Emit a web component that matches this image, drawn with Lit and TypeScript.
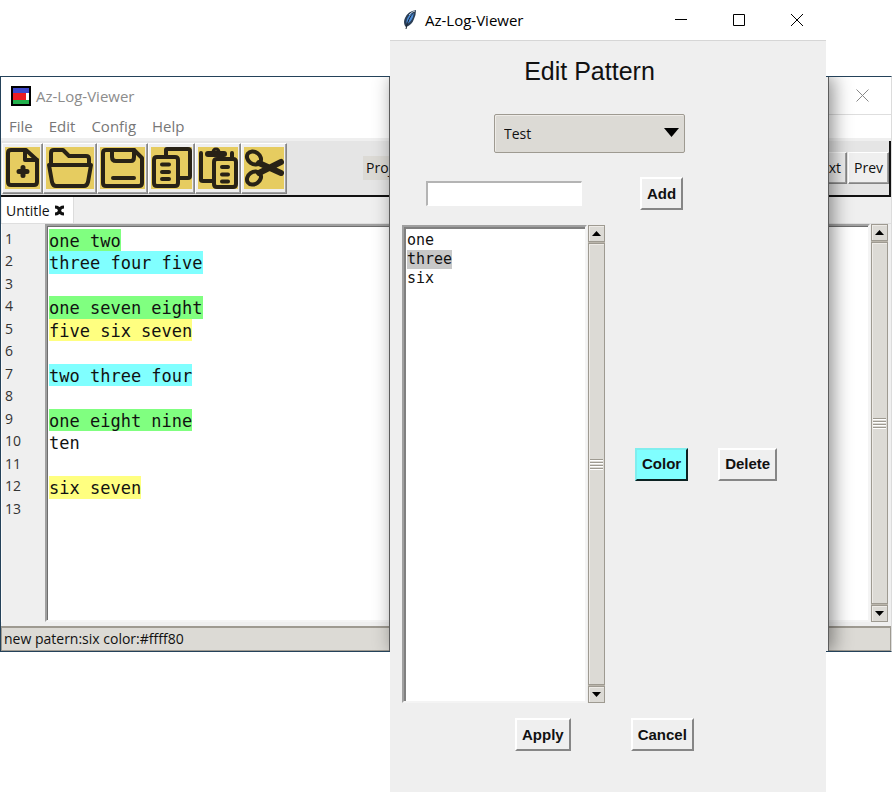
import { LitElement, html, svg, css } from "lit";
import { customElement, property } from "lit/decorators.js";

interface Line {
  text: string;
  tone: string;
}

const LINES: Line[] = [
  { text: "one two", tone: "green" },
  { text: "three four five", tone: "cyan" },
  { text: "", tone: "" },
  { text: "one seven eight", tone: "green" },
  { text: "five six seven", tone: "yellow" },
  { text: "", tone: "" },
  { text: "two three four", tone: "cyan" },
  { text: "", tone: "" },
  { text: "one eight nine", tone: "green" },
  { text: "ten", tone: "" },
  { text: "", tone: "" },
  { text: "six seven", tone: "yellow" },
  { text: "", tone: "" },
];

const TOOLS = [
  {
    name: "New",
    w: 35,
    art: svg`<path d="M21 3H6q-3 0-3 3v29q0 3 3 3h23q3 0 3-3V13z"/><path d="M20 3v10h12"/><path d="M18 20.500v8M14 24.500h8" stroke-width="5"/>`,
  },
  {
    name: "Open",
    w: 48,
    art: svg`<path d="M5 17V6q0-3 3-3h9l6 6h17q3 0 3 3v5"/><path d="M3 18h42l-3 17q-1 4-4 4H10q-3 0-4-4z"/>`,
  },
  {
    name: "Save",
    w: 45,
    art: svg`<path d="M3 6q0-3 3-3h28l8 8v25q0 3-3 3H6q-3 0-3-3z"/><path d="M12 3v7q0 4 4 4h15q3 0 3-4V3M13 31h21"/>`,
  },
  {
    name: "Copy",
    w: 41,
    art: svg`<path d="M15 9V3q0-1 1-1h21q2 0 2 2v25q0 2-2 2h-9"/><path d="M3 13q0-3 3-3h18q3 0 3 3v23q0 3-3 3H6q-3 0-3-3z"/><path d="M11 17.500h7M11 25h7M11 32h7"/>`,
  },
  {
    name: "Paste",
    w: 40,
    art: svg`<path d="M3 6v27q0 1 2 1h9M34 6v4"/><path d="M10 7h16" stroke-width="6"/><path d="M15 6q0-4 3-4t3 4" stroke-width="3"/><path d="M16 15q0-3 3-3h16q3 0 3 3v22q0 3-3 3H19q-3 0-3-3z"/><path d="M24 20h6M24 27.500h6M24 34.500h6"/>`,
  },
  {
    name: "Cut",
    w: 40,
    art: svg`<ellipse cx="10" cy="11" rx="7.500" ry="6" transform="rotate(35 10 11)"/><ellipse cx="10" cy="31" rx="7.500" ry="6" transform="rotate(-35 10 31)"/><path d="M15 16l22 10M15 26l22-11" stroke-width="6"/>`,
  },
];

@customElement("tk-scrollbar")
export class TkScrollbar extends LitElement {
  @property() label = "";

  static styles = css`
    :host {
      display: flex;
      flex-direction: column;
      gap: 1px;
      width: 17px;
      flex: none;
      background: #bab5ab;
    }
    .arrow,
    .thumb {
      box-sizing: border-box;
      margin: 0;
      padding: 0;
      border: 1px solid #9e9a91;
      background: #dcdad5;
      box-shadow: inset 1px 1px #eeebe7;
      display: flex;
      align-items: center;
      justify-content: center;
    }
    .arrow {
      height: 17px;
    }
    .thumb {
      flex: 1;
    }
    svg {
      display: block;
    }
  `;

  render() {
    return html`
      <button class="arrow" aria-label="Scroll ${this.label} up">
        <svg width="9" height="5"><path d="M4.500 0L9 5H0z" /></svg>
      </button>
      <div class="thumb">
        <svg width="13" height="13" shape-rendering="crispEdges">
          <path d="M0 1.500h13M0 4.500h13M0 7.500h13M0 10.500h13" stroke="#9e9a91" />
          <path d="M0 2.500h13M0 5.500h13M0 8.500h13M0 11.500h13" stroke="#fff" />
        </svg>
      </div>
      <button class="arrow" aria-label="Scroll ${this.label} down">
        <svg width="9" height="5"><path d="M0 0h9L4.500 5z" /></svg>
      </button>
    `;
  }
}

@customElement("log-window")
export class LogWindow extends LitElement {
  static styles = css`
    :host {
      display: block;
      position: relative;
      box-sizing: border-box;
      overflow: hidden;
      background: #efefef;
      border: 1px solid #24425a;
      border-right-color: #dcdcdc;
      font: 14px/20px "Open Sans", "Noto Sans", sans-serif;
      color: #111;
    }
    button {
      margin: 0;
      font: inherit;
      color: inherit;
    }
    .titlebar {
      display: flex;
      align-items: center;
      height: 37px;
      padding-left: 10px;
      gap: 5px;
      background: #fff;
      color: #8c8c8c;
      font-size: 15px;
    }
    .titlebar svg {
      display: block;
    }
    .title {
      flex: 1;
    }
    .close {
      width: 58px;
      height: 37px;
      padding: 0;
      border: 0;
      background: none;
      display: flex;
      align-items: center;
      justify-content: center;
    }
    .menu {
      display: flex;
      gap: 16px;
      height: 24px;
      padding-left: 8px;
      align-items: center;
      background: linear-gradient(#dedede, #dedede) right top / 64px 1px no-repeat #fff;
      border-bottom: 3px solid #efefef;
    }
    .menu button {
      padding: 0;
      border: 0;
      background: none;
      font-size: 15px;
      color: #777;
    }
    .toolbar {
      display: flex;
      align-items: center;
      height: 54px;
      padding-left: 1px;
      background: #e5e5e5;
      border-bottom: 2px solid #111;
      border-right: 2px solid #111;
    }
    .tool,
    .nav {
      border: 1px solid;
      border-color: #fff #858585 #858585 #fff;
      box-shadow: inset -1px -1px #a0a0a0;
      background: #efefef;
    }
    .tool {
      padding: 3px 2px 4px;
    }
    .tool svg {
      display: block;
      background: #e6cc60;
    }
    .spacer {
      flex: 1;
    }
    .project {
      margin-left: 76px;
      padding: 2px 3px;
      background: #dcdad5;
    }
    .nav {
      height: 32px;
      padding: 0 5px;
      margin-left: 1px;
    }
    .tabs {
      display: flex;
      height: 26px;
      padding-left: 1px;
      border-bottom: 1px solid #dedede;
    }
    .tab {
      display: flex;
      align-items: center;
      gap: 4px;
      padding: 1px 8px 0 4px;
      background: #fff;
      border-right: 1px solid #dcdcdc;
    }
    .tab button {
      padding: 0;
      border: 0;
      background: none;
    }
    .tab svg {
      display: block;
    }
    .editor {
      display: flex;
      min-height: 398px;
      padding-right: 3px;
      margin-bottom: 4px;
      gap: 1px;
    }
    .numbers,
    .text {
      display: grid;
      grid-auto-rows: 22px 23px;
      align-content: start;
      margin: 0;
    }
    .numbers {
      width: 43px;
      padding: 4px 0 0 4px;
      box-sizing: border-box;
      list-style: none;
      line-height: 22px;
      color: #333;
      box-shadow: inset 1px 0 #fafafa;
    }
    .text {
      flex: 1;
      padding: 3px 2px 2px;
      background: #fff;
      border: 2px solid;
      border-color: #a0a0a0 #f4f4f4 #f4f4f4 #a0a0a0;
      box-shadow: inset 1px 1px #6e6e6e;
      font: 17px/24px "DejaVu Sans Mono", monospace;
    }
    .mark {
      justify-self: start;
      white-space: pre;
    }
    .green {
      background: #80ff80;
    }
    .cyan {
      background: #80ffff;
    }
    .yellow {
      background: #ffff80;
    }
    .status {
      height: 22px;
      padding-left: 2px;
      background: #dcdad5;
      border: 1px solid #9e9a91;
      border-width: 2px 1px 1px;
      line-height: 22px;
    }
    .backing {
      position: absolute;
      top: -1px;
      bottom: -1px;
      left: 388px;
      width: 438px;
      background: #efefef;
      border: solid #5c5c5c;
      border-width: 0 1px;
      box-shadow: 4px 0 18px rgba(0, 0, 0, 0.45);
    }
  `;

  render() {
    return html`
      <div class="titlebar">
        <svg width="20" height="20" shape-rendering="crispEdges">
          <path d="M0 0h20v20H0z" />
          <path d="M2 2h16v5H2z" fill="#3f48cc" />
          <path d="M2 7h13v7H2z" fill="#ed1c24" />
          <path d="M15 7h3v7h-3z" fill="#fff" />
          <path d="M2 14h16v4H2z" fill="#22b14c" />
        </svg>
        <span class="title">Az-Log-Viewer</span>
        <button class="close" aria-label="Close main window">
          <svg width="13" height="13">
            <path d="M0.500 0.500l12 12M12.500 0.500l-12 12" stroke="#888" />
          </svg>
        </button>
      </div>
      <nav class="menu">
        ${["File", "Edit", "Config", "Help"].map((m) => html`<button>${m}</button>`)}
      </nav>
      <div class="toolbar">
        ${TOOLS.map(
          (t) => html`<button class="tool" aria-label=${t.name}>
            <svg width=${t.w} height="42" fill="none" stroke="#282216" stroke-width="4" stroke-linecap="round" stroke-linejoin="round">
              ${t.art}
            </svg>
          </button>`
        )}
        <span class="project">Project</span>
        <span class="spacer"></span>
        <button class="nav">Next</button>
        <button class="nav">Prev</button>
      </div>
      <div class="tabs">
        <div class="tab">
          <span>Untitle</span>
          <button aria-label="Close tab">
            <svg width="11" height="11">
              <path d="M1 2q4 0 4.500 3.500Q6 2 10 2M1 9q4 0 4.500-3.500Q6 9 10 9" fill="none" stroke="#111" stroke-width="3" />
            </svg>
          </button>
        </div>
      </div>
      <div class="editor">
        <ol class="numbers">
          ${LINES.map((_, i) => html`<li>${i + 1}</li>`)}
        </ol>
        <div class="text">
          ${LINES.map((l) => html`<span class="mark ${l.tone}">${l.text}</span>`)}
        </div>
        <tk-scrollbar label="log"></tk-scrollbar>
      </div>
      <div class="status">new patern:six color:#ffff80</div>
      <div class="backing"></div>
    `;
  }
}

@customElement("pattern-dialog")
export class PatternDialog extends LitElement {
  static styles = css`
    :host {
      display: block;
      width: 436px;
      background: #efefef;
      font: 15px/20px "Liberation Sans", sans-serif;
      color: #111;
    }
    button,
    input,
    select {
      box-sizing: border-box;
      margin: 0;
      font: inherit;
      color: inherit;
      border-radius: 0;
    }
    svg {
      display: block;
    }
    .titlebar {
      display: flex;
      align-items: center;
      height: 40px;
      padding-left: 12px;
      gap: 8px;
      background: #fff;
      border-bottom: 1px solid #d6d6d6;
      font: 15px/20px "Open Sans", "Noto Sans", sans-serif;
      color: #000;
    }
    .title {
      flex: 1;
    }
    .controls {
      display: flex;
    }
    .controls button {
      display: flex;
      align-items: center;
      justify-content: center;
      width: 58px;
      height: 40px;
      padding: 0;
      border: 0;
      background: none;
    }
    .head {
      display: flex;
      flex-direction: column;
      align-items: center;
      padding-right: 37px;
      gap: 28px;
    }
    h1 {
      margin: 15px 0 0;
      font: 25px/30px "Liberation Sans", sans-serif;
    }
    .combo {
      position: relative;
      width: 191px;
    }
    .combo select {
      width: 100%;
      height: 39px;
      padding: 0 9px;
      appearance: none;
      background: #dcdad5;
      border: 1px solid #9e9a91;
      border-radius: 2px;
      box-shadow: inset 1px 1px #eeebe7;
      font: 14px/20px "Open Sans", "Noto Sans", sans-serif;
    }
    .combo svg {
      position: absolute;
      right: 6px;
      top: 14px;
      pointer-events: none;
    }
    .add {
      display: flex;
      align-items: center;
      gap: 58px;
      padding: 24px 0 15px 36px;
    }
    .add input {
      width: 156px;
      height: 25px;
      padding: 0 4px;
      background: #fff;
      border: 2px solid;
      border-color: #b4b4b4 #fff #fff #b4b4b4;
      border-width: 2px 1px 1px 2px;
    }
    .btn {
      height: 33px;
      padding: 0 5px;
      border: 2px solid;
      border-color: #fff #868686 #868686 #fff;
      background: #efefef;
      font-weight: bold;
    }
    .btn.paint {
      background: #80ffff;
      border-color: #80eeee #0c2222 #0c2222 #80eeee;
    }
    .middle {
      display: flex;
      align-items: center;
      gap: 30px;
      padding-left: 12px;
    }
    .listbox {
      display: flex;
      gap: 1px;
    }
    .list {
      box-sizing: border-box;
      width: 185px;
      min-height: 478px;
      margin: 0;
      padding: 4px 3px;
      list-style: none;
      background: #fff;
      border: 2px solid;
      border-color: #a0a0a0 #f4f4f4 #f4f4f4 #a0a0a0;
      box-shadow: inset 2px 2px #808080;
    }
    .list button {
      display: block;
      height: 19px;
      padding: 0;
      border: 0;
      background: none;
      font: 15px/19px "DejaVu Sans Mono", monospace;
    }
    .list button[aria-pressed="true"] {
      background: #c8c8c8;
    }
    .foot {
      display: flex;
      gap: 60px;
      padding: 15px 0 41px 125px;
    }
  `;

  render() {
    return html`
      <div class="titlebar">
        <svg width="15" height="20">
          <path d="M14 0Q6 1 3 8q-2 4 0 8l1 1Q10 15 12 9q2-4 2-9z" fill="#2b3e55" />
          <path d="M12 2Q7 4 5 9q-1 3 0 5Q9 12 11 7z" fill="#4d8fdc" />
          <path d="M12 2Q6 8 4 19" fill="none" stroke="#1b2430" />
          <path d="M13 1Q9 2 7 5" fill="none" stroke="#b9c4cf" />
        </svg>
        <span class="title">Az-Log-Viewer</span>
        <div class="controls">
          <button aria-label="Minimize">
            <svg width="12" height="12"><path d="M0 5.500h12" stroke="#000" /></svg>
          </button>
          <button aria-label="Maximize">
            <svg width="12" height="12"><path d="M.5.5h11v11H.5z" fill="none" stroke="#000" /></svg>
          </button>
          <button aria-label="Close">
            <svg width="12" height="12"><path d="M0 0l12 12M12 0L0 12" stroke="#000" /></svg>
          </button>
        </div>
      </div>
      <div class="head">
        <h1>Edit Pattern</h1>
        <div class="combo">
          <select aria-label="Pattern set">
            <option>Test</option>
          </select>
          <svg width="15" height="9"><path d="M0 0h15L7.500 9z" /></svg>
        </div>
      </div>
      <div class="add">
        <input type="text" aria-label="New pattern" />
        <button class="btn">Add</button>
      </div>
      <div class="middle">
        <div class="listbox">
          <ul class="list">
            ${["one", "three", "six"].map(
              (p) => html`<li><button aria-pressed=${p === "three" ? "true" : "false"}>${p}</button></li>`
            )}
          </ul>
          <tk-scrollbar label="patterns"></tk-scrollbar>
        </div>
        <button class="btn paint">Color</button>
        <button class="btn">Delete</button>
      </div>
      <div class="foot">
        <button class="btn">Apply</button>
        <button class="btn">Cancel</button>
      </div>
    `;
  }
}

@customElement("app-root")
export class AppRoot extends LitElement {
  static styles = css`
    :host {
      display: grid;
      grid-template-columns: minmax(0, 1fr);
      align-items: start;
      background: #fff;
    }
    log-window,
    pattern-dialog {
      grid-area: 1 / 1;
    }
    log-window {
      margin: 76px 2px 0 0;
    }
    pattern-dialog {
      margin-left: 390px;
      z-index: 1;
    }
  `;

  render() {
    return html`
      <log-window></log-window>
      <pattern-dialog></pattern-dialog>
    `;
  }
}
